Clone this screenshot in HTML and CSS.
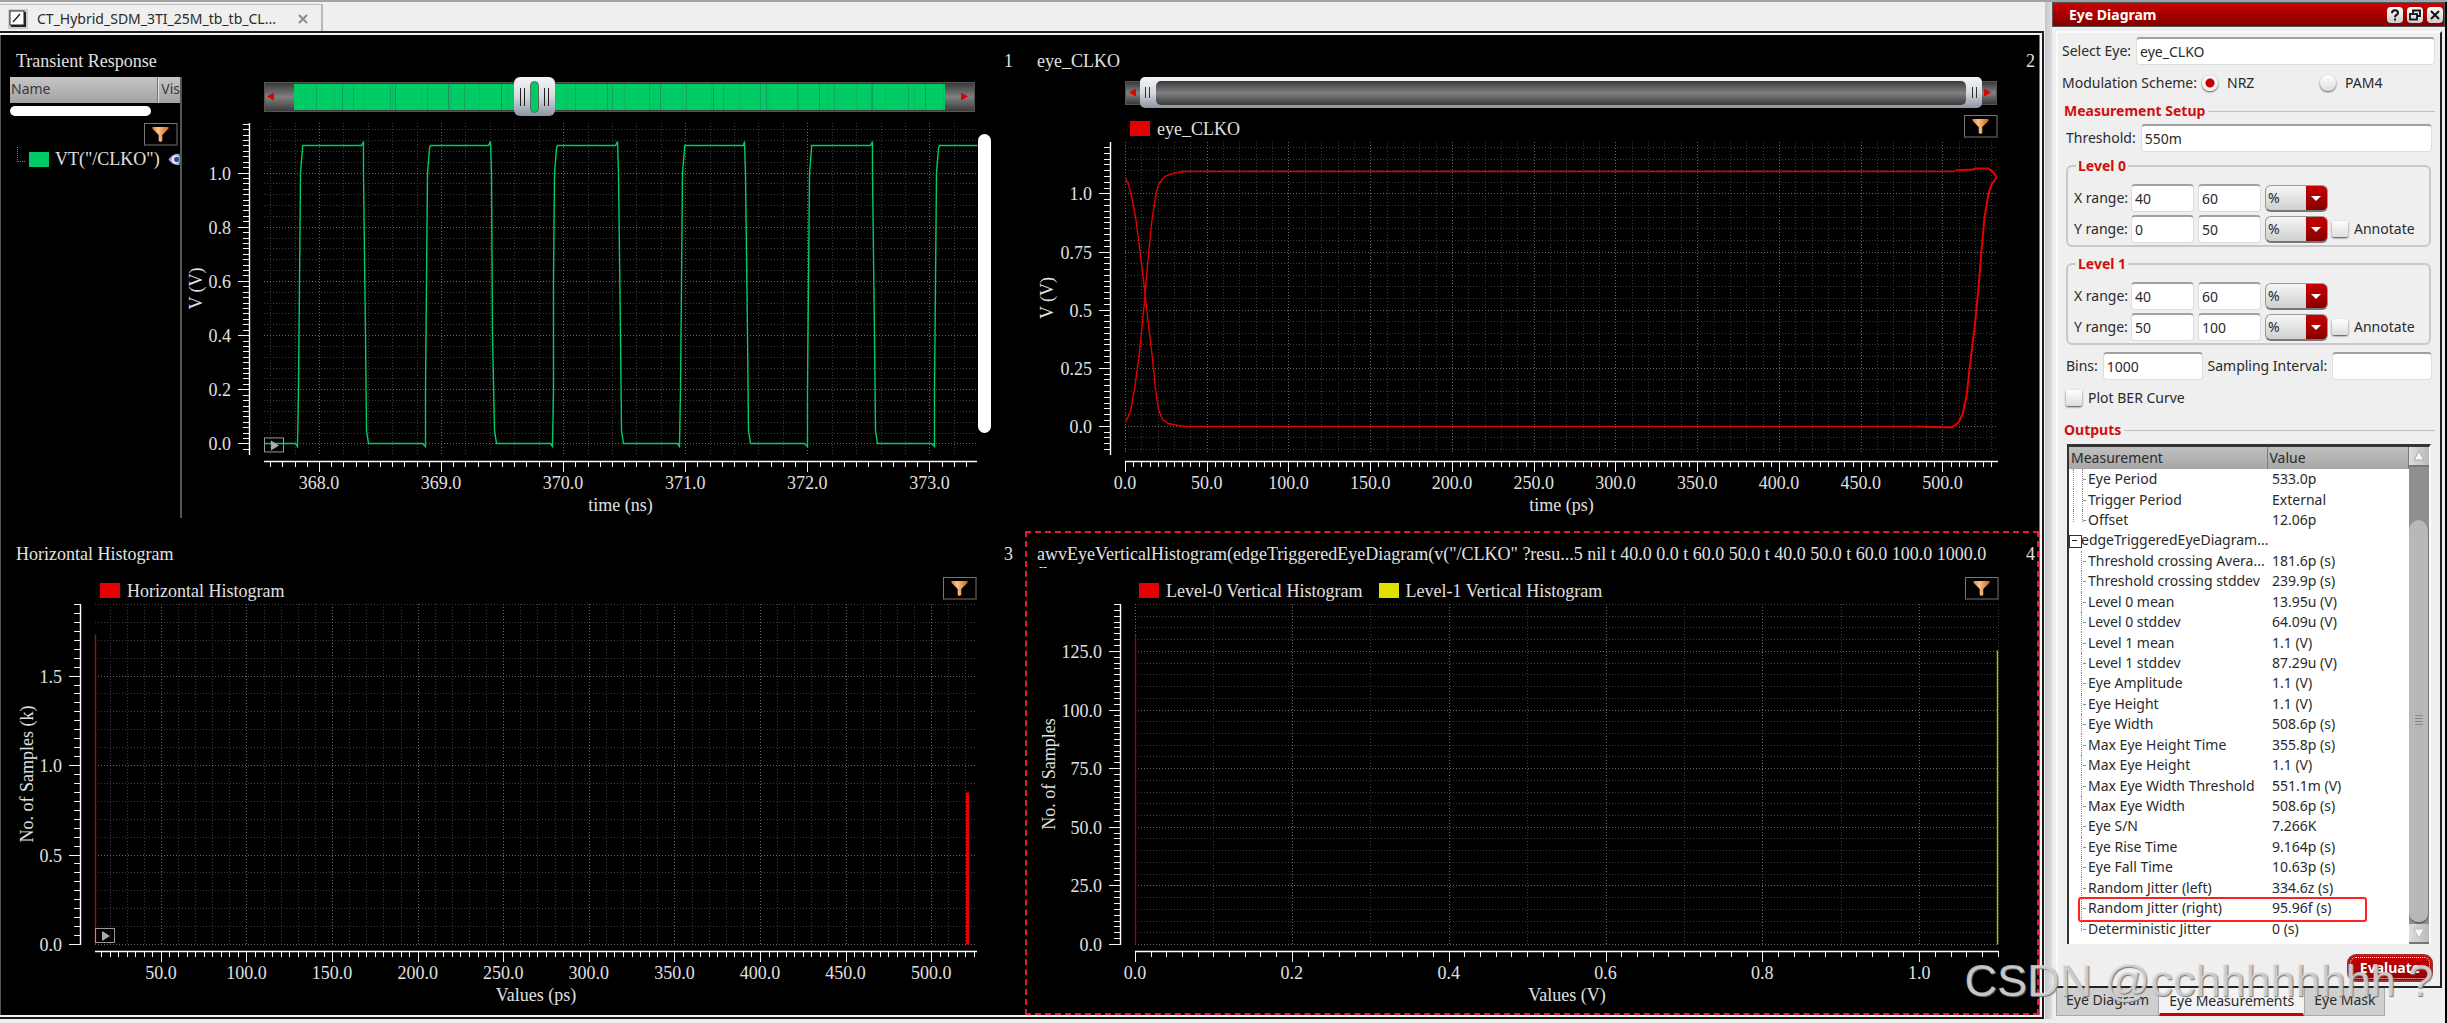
FILE: index.html
```html
<!DOCTYPE html>
<html lang="en">
<head>
<meta charset="utf-8">
<title>Eye Diagram</title>
<link rel="stylesheet" href="styles.css">
</head>
<body>
<svg class="defs" width="0" height="0" aria-hidden="true">
  <defs>
    <linearGradient id="copper" x1="0" x2="1" y1="0" y2="0">
      <stop offset="0" stop-color="#d97f2c"/><stop offset=".35" stop-color="#ffc48c"/><stop offset="1" stop-color="#c4691a"/>
    </linearGradient>
    <symbol id="funnel" viewBox="0 0 18 18">
      <path d="M0 1h18v2L11 10v7l-2 1-2-1v-7L0 3z" fill="url(#copper)"/>
    </symbol>
  </defs>
</svg>
<div class="app">
  <main class="workspace">
    <div class="tabbar">
      <div class="doc-tab">
        <svg class="doc-icon" viewBox="0 0 18 18" aria-hidden="true"><rect x="1" y="1" width="14" height="14" fill="#fff" stroke="#222"/><path d="M2 16h14V2" fill="none" stroke="#222" stroke-width="2"/><path d="M4 12L11 4" stroke="#222" stroke-width="1.3"/></svg>
        <span class="doc-name">CT_Hybrid_SDM_3TI_25M_tb_tb_CL...</span>
        <button class="doc-close" type="button" aria-label="Close tab"><svg viewBox="0 0 10 10"><path d="M1 1l8 8M9 1l-8 8" stroke="#8a8a8a" stroke-width="2"/></svg></button>
      </div>
    </div>
    <div class="plots">
      <section class="pane">
        <header class="pane-head"><h2>Transient Response</h2><span>1</span></header>
        <div class="pane-body">
          <aside class="traces">
            <div class="traces-head"><span class="col-name">Name</span><span class="col-vis">Vis</span></div>
            <div class="traces-scroll"></div>
            <button class="filter filter-trace" type="button" aria-label="Filter"><svg><use href="#funnel"/></svg></button>
            <div class="trace"><i class="swatch green"></i><span>VT("/CLKO")</span>
              <svg class="eye" viewBox="0 0 12 14" aria-hidden="true"><path d="M0 7Q5 0 12 1v12Q5 14 0 7z" fill="#93a5cf"/><circle cx="8" cy="7" r="4.5" fill="#e8eefb"/><circle cx="9" cy="7" r="3" fill="#2f4f96"/></svg>
            </div>
          </aside>
          <div class="chart-col">
            <div class="range range-wave">
              <div class="track"><i class="arrow left"></i><i class="wave"></i><i class="arrow right"></i></div>
              <div class="thumb"><i class="grip"></i><i class="pill"></i><i class="grip"></i></div>
            </div>
            <div class="chart-box"><svg class="chart" data-chart="transient"></svg><i class="vscroll"></i></div>
          </div>
        </div>
      </section>

      <section class="pane">
        <header class="pane-head"><h2>eye_CLKO</h2><span>2</span></header>
        <div class="range range-eye">
          <div class="track"><i class="arrow left"></i><i class="arrow right"></i></div>
          <div class="frame"><i class="grip"></i><i class="window"></i><i class="grip"></i></div>
        </div>
        <div class="legend legend-eye"><i class="swatch red"></i><span>eye_CLKO</span>
          <button class="filter" type="button" aria-label="Filter"><svg><use href="#funnel"/></svg></button></div>
        <div class="chart-box"><svg class="chart" data-chart="eye"></svg></div>
      </section>

      <section class="pane lower">
        <header class="pane-head"><h2>Horizontal Histogram</h2><span>3</span></header>
        <div class="legend legend-h"><i class="swatch red"></i><span>Horizontal Histogram</span>
          <button class="filter" type="button" aria-label="Filter"><svg><use href="#funnel"/></svg></button></div>
        <div class="chart-box"><svg class="chart" data-chart="horizontal"></svg></div>
      </section>

      <section class="pane lower selected">
        <header class="pane-head"><h2>awvEyeVerticalHistogram(edgeTriggeredEyeDiagram(v("/CLKO" ?resu...5 nil t 40.0 0.0 t 60.0 50.0 t 40.0 50.0 t 60.0 100.0 1000.0<small>--</small></h2><span>4</span></header>
        <div class="legend legend-v"><i class="swatch red"></i><span>Level-0 Vertical Histogram</span><i class="swatch yellow"></i><span>Level-1 Vertical Histogram</span>
          <button class="filter" type="button" aria-label="Filter"><svg><use href="#funnel"/></svg></button></div>
        <div class="chart-box"><svg class="chart" data-chart="vertical"></svg></div>
      </section>
    </div>
  </main>
  <div class="splitter"></div>

  <aside class="dock">
    <header class="dock-title"><h1>Eye Diagram</h1>
      <button type="button" aria-label="Help"><svg viewBox="0 0 16 16"><path d="M5 6.2Q5 3.2 8 3.2t3 2.6Q11 7.200 9.500 8T8 10.200" fill="none" stroke="#111" stroke-width="2"/><rect x="7" y="11.500" width="2" height="2" fill="#111"/></svg></button>
      <button type="button" aria-label="Float"><svg viewBox="0 0 16 16"><path d="M6 6V3.500h7V9h-3M6 3.500h7" fill="none" stroke="#111" stroke-width="1.800"/><rect x="3" y="7" width="7" height="5.500" fill="none" stroke="#111" stroke-width="1.800"/></svg></button>
      <button type="button" aria-label="Close"><svg viewBox="0 0 16 16"><path d="M4 4l8 8M12 4l-8 8" stroke="#111" stroke-width="2"/></svg></button>
    </header>
    <form class="dock-frame">
      <div class="row"><label for="eye">Select Eye:</label><input class="text grow" id="eye" type="text" value="eye_CLKO"></div>
      <div class="row scheme"><span>Modulation Scheme:</span>
        <label class="nrz"><input type="radio" name="scheme" checked>NRZ</label>
        <label><input type="radio" name="scheme">PAM4</label></div>
      <h3>Measurement Setup</h3>
      <div class="row inset"><label for="thr">Threshold:</label><input class="text grow" id="thr" type="text" value="550m"></div>
      <fieldset>
        <legend>Level 0</legend>
        <div class="pair"><label for="x0">X range:</label><input class="text" id="x0" type="text" value="40"><input class="text" type="text" aria-label="X range end" value="60"><span class="combo"><select aria-label="X unit"><option>%</option></select></span></div>
        <div class="pair"><label for="y0">Y range:</label><input class="text" id="y0" type="text" value="0"><input class="text" type="text" aria-label="Y range end" value="50"><span class="combo"><select aria-label="Y unit"><option>%</option></select></span><label class="check"><input type="checkbox">Annotate</label></div>
      </fieldset>
      <fieldset class="second">
        <legend>Level 1</legend>
        <div class="pair"><label for="x1">X range:</label><input class="text" id="x1" type="text" value="40"><input class="text" type="text" aria-label="X range end" value="60"><span class="combo"><select aria-label="X unit"><option>%</option></select></span></div>
        <div class="pair"><label for="y1">Y range:</label><input class="text" id="y1" type="text" value="50"><input class="text" type="text" aria-label="Y range end" value="100"><span class="combo"><select aria-label="Y unit"><option>%</option></select></span><label class="check"><input type="checkbox">Annotate</label></div>
      </fieldset>
      <div class="row inset bins"><label for="bins">Bins:</label><input class="text grow" id="bins" type="text" value="1000"><label for="samp">Sampling Interval:</label><input class="text grow" id="samp" type="text"></div>
      <div class="row inset"><label class="check"><input type="checkbox">Plot BER Curve</label></div>
      <h3 class="outputs">Outputs</h3>
      <div class="results">
        <table>
          <thead><tr><th>Measurement</th><th>Value</th></tr></thead>
          <tbody>
            <tr class="deep"><td>Eye Period</td><td>533.0p</td></tr>
            <tr class="deep"><td>Trigger Period</td><td>External</td></tr>
            <tr class="deep end"><td>Offset</td><td>12.06p</td></tr>
            <tr class="parent"><td>edgeTriggeredEyeDiagram...</td><td></td></tr>
            <tr><td>Threshold crossing Avera...</td><td>181.6p (s)</td></tr>
            <tr><td>Threshold crossing stddev</td><td>239.9p (s)</td></tr>
            <tr><td>Level 0 mean</td><td>13.95u (V)</td></tr>
            <tr><td>Level 0 stddev</td><td>64.09u (V)</td></tr>
            <tr><td>Level 1 mean</td><td>1.1 (V)</td></tr>
            <tr><td>Level 1 stddev</td><td>87.29u (V)</td></tr>
            <tr><td>Eye Amplitude</td><td>1.1 (V)</td></tr>
            <tr><td>Eye Height</td><td>1.1 (V)</td></tr>
            <tr><td>Eye Width</td><td>508.6p (s)</td></tr>
            <tr><td>Max Eye Height Time</td><td>355.8p (s)</td></tr>
            <tr><td>Max Eye Height</td><td>1.1 (V)</td></tr>
            <tr><td>Max Eye Width Threshold</td><td>551.1m (V)</td></tr>
            <tr><td>Max Eye Width</td><td>508.6p (s)</td></tr>
            <tr><td>Eye S/N</td><td>7.266K</td></tr>
            <tr><td>Eye Rise Time</td><td>9.164p (s)</td></tr>
            <tr><td>Eye Fall Time</td><td>10.63p (s)</td></tr>
            <tr><td>Random Jitter (left)</td><td>334.6z (s)</td></tr>
            <tr class="marked"><td>Random Jitter (right)</td><td>95.96f (s)</td></tr>
            <tr class="end"><td>Deterministic Jitter</td><td>0 (s)</td></tr>
          </tbody>
        </table>
        <div class="scroll">
          <button type="button" aria-label="Scroll up"><svg viewBox="0 0 12 12"><path d="M6 1l5 9H1z" fill="#f4f4f4" stroke="#aaa"/></svg></button>
          <div class="scroll-track"><i></i></div>
          <button type="button" aria-label="Scroll down"><svg viewBox="0 0 12 12"><path d="M6 11L1 2h10z" fill="#f8f8f8" stroke="#bbb"/></svg></button>
        </div>
      </div>
      <div class="actions"><button class="evaluate" type="button">Evaluate</button></div>
    </form>
    <nav class="dock-tabs">
      <button type="button">Eye Diagram</button><button class="active" type="button">Eye Measurements</button><button type="button">Eye Mask</button>
    </nav>
  </aside>
</div>
<div class="watermark">CSDN @cchhhhhhhh ?</div>
<script src="charts.js"></script>
</body>
</html>
```
FILE: styles.css
```css
* { box-sizing: border-box; }
html, body { margin: 0; height: 100%; }
body {
  font: 14px/20px "Noto Sans", "Open Sans", sans-serif;
  color: #2a2a2a;
  background: #efefef;
  overflow: hidden;
}
button, input, select { font: inherit; color: inherit; margin: 0; }
button { padding: 0; border: 0; background: none; }
h1, h2, h3 { margin: 0; font-size: inherit; font-weight: inherit; }
i { display: block; }
.defs { position: absolute; }

.app {
  display: flex;
  height: 100vh;
  min-height: 1000px;
  border-top: 2px solid #a3a3a3;
}
.workspace {
  flex: 1;
  min-width: 0;
  display: flex;
  flex-direction: column;
  padding-bottom: 6px;
}

/* document tabs */
.tabbar { height: 33px; border-bottom: 3px solid #fafafa; display: flex; padding-top: 2px; }
.doc-tab {
  width: 323px;
  height: 28px;
  display: flex;
  align-items: center;
  padding: 0 13px 0 8px;
  border-top: 1px solid #bbb;
  border-right: 2px solid #b8b8b8;
}
.doc-icon { width: 20px; height: 20px; background: #ccc; padding: 1px; }
.doc-name { flex: 1; padding-left: 9px; white-space: nowrap; }
.doc-close { width: 10px; height: 10px; display: flex; }

/* plot canvas */
.plots {
  flex: 1;
  min-height: 0;
  display: grid;
  grid-template-columns: minmax(0, 1024fr) minmax(0, 1014fr);
  grid-template-rows: minmax(0, 496fr) minmax(0, 484fr);
  background: #000;
  border-left: 1px solid #555;
  border-right: 1px solid #777;
  box-shadow: 0 0 0 2px #f6f3f5, 0 0 0 4px #1c1c1c;
  margin-right: 5px;
  margin-bottom: 2px;
  color: #e0e0e0;
  font: 18px/22px "Liberation Serif", serif;
}
.pane { display: flex; flex-direction: column; min-width: 0; }
.pane-head { height: 42px; flex: none; display: flex; justify-content: space-between; padding: 15px 4px 0 12px; white-space: nowrap; }
.pane:nth-child(odd) .pane-head { padding-left: 15px; padding-right: 12px; }
.lower .pane-head { padding-top: 12px; }
.pane-head small { display: block; font-size: 12px; line-height: 4px; padding-left: 2px; }
.selected { border: 2px dashed #e8173a; }
.selected .pane-head { padding: 10px 2px 0 10px; height: 40px; }
.pane-body { flex: 1; display: flex; min-height: 0; }

.traces { width: 181px; padding-left: 9px; border-right: 2px solid #555; margin-bottom: 13px; flex: none; }
.traces-head {
  height: 26px;
  display: flex;
  background: linear-gradient(#c6c6c6, #a2a2a2);
  color: #3a3a3a;
  font: 14px/23px "Noto Sans", "Open Sans", sans-serif;
  overflow: hidden;
}
.col-name { width: 153px; padding-left: 1px; border-right: 1px solid #777; }
.col-vis { padding-left: 2px; border-left: 1px solid #ddd; }
.traces-scroll { width: 141px; height: 10px; margin-top: 3px; border-radius: 5px; background: #fff; }
.filter {
  width: 34px;
  height: 23px;
  border: 1px solid #777;
  border-right: 2px solid #3a3a3a;
  border-bottom: 2px solid #3a3a3a;
  background: #000;
  display: flex;
  align-items: center;
  justify-content: center;
  margin-left: auto;
  flex: none;
}
.filter svg { width: 17px; height: 16px; }
.filter-trace { margin: 7px 2px 0 auto; }
.trace { display: flex; align-items: center; padding-left: 19px; height: 26px; position: relative; }
.trace::before { content: ""; width: 7px; height: 14px; border-left: 1px dotted #777; border-bottom: 1px dotted #777; position: absolute; left: 7px; top: 1px; }
.trace span { padding-left: 6px; }
.eye { width: 12px; height: 13px; margin-left: auto; }
.swatch { width: 20px; height: 15px; flex: none; }
.green { background: #00cc66; }
.red { background: #e40000; }
.yellow { background: #e0e000; }

.chart-col { flex: 1; min-width: 0; display: flex; flex-direction: column; }
.chart-box { flex: 1; min-height: 0; position: relative; }
.chart { position: absolute; inset: 0; width: 100%; height: 100%; }
.chart text { fill: #e0e0e0; }
.vscroll { position: absolute; right: 34px; top: 18px; bottom: 98px; width: 13px; border-radius: 7px; background: #fff; }

/* range sliders */
.range { position: relative; display: flex; align-items: center; flex: none; }
.track {
  flex: 1;
  display: flex;
  align-items: center;
  justify-content: space-between;
  border: 1px solid #555;
  background: linear-gradient(#3a3a3a, #808080 50%, #3a3a3a);
}
.range-wave { height: 39px; margin: 0 50px 0 82px; }
.range-wave .track { height: 30px; padding: 1px 6px 1px 2px; }
.range-eye { height: 31px; margin: 0 42px 0 100px; }
.range-eye .track { height: 24px; padding: 0 5px 0 3px; }
.arrow { width: 7px; height: 8px; background: #e00000; }
.arrow.left { clip-path: polygon(100% 0, 0 50%, 100% 100%); }
.arrow.right { clip-path: polygon(0 0, 100% 50%, 0 100%); }
.wave {
  flex: 1;
  height: 26px;
  margin: 0 16px 0 20px;
  background:
    repeating-linear-gradient(90deg, transparent 0 22px, #2a704a66 22px 23px, transparent 23px 37px),
    repeating-linear-gradient(90deg, transparent 0 11px, #30805044 11px 12px, transparent 12px 29px),
    repeating-linear-gradient(90deg, transparent 0 48px, #2a604a77 48px 49px, transparent 49px 53px),
    #00cc66;
}
.thumb {
  position: absolute;
  left: 35.2%;
  width: 41px;
  height: 39px;
  border-radius: 6px;
  background: linear-gradient(#f4f5fa, #d6d9e0 50%, #8c96a0);
  display: flex;
  align-items: center;
  justify-content: space-between;
  padding: 0 6px;
}
.grip { width: 5px; height: 18px; border: solid #222; border-width: 0 1px; }
.pill { width: 9px; height: 32px; border-radius: 5px; background: #0c6; border: 1px solid #5a6a62; }
.frame {
  position: absolute;
  inset: 0 15px;
  border-radius: 5px;
  background: linear-gradient(#f4f5fa, #d6d9e0 50%, #8c96a0);
  display: flex;
  align-items: center;
  justify-content: space-between;
  padding: 0 5px;
}
.frame .grip { height: 11px; width: 5px; border-color: #333; }
.window { flex: 1; height: 24px; margin: 0 6px; border-radius: 5px; background: linear-gradient(#3a3a3a, #808080 50%, #3a3a3a); }

.legend { display: flex; align-items: center; gap: 7px; flex: none; white-space: nowrap; }
.legend .filter { align-self: flex-start; }
.legend span + .swatch { margin-left: 9px; }
.legend-eye { height: 34px; padding: 7px 41px 0 105px; }
.legend-h { height: 31px; padding: 4px 48px 0 99px; }
.legend-v { height: 31px; padding: 4px 38px 0 112px; }

/* splitter and dock */
.splitter { flex: 0 0 7px; background: linear-gradient(90deg, #c4c5cc, #dcdce0); margin-bottom: 4px; }
.dock { flex: 0 0 395px; border-right: 2px solid #000; display: flex; flex-direction: column; padding-bottom: 7px; }
.dock-title {
  height: 25px;
  flex: none;
  display: flex;
  align-items: center;
  gap: 4px;
  padding: 0 1px 0 16px;
  background: linear-gradient(#cc0000, #820000);
  border: 1px solid #555;
  color: #fff;
  font-weight: bold;
}
.dock-title h1 { flex: 1; }
.dock-title button { width: 16px; height: 16px; border-radius: 4px; background: linear-gradient(#fff, #ccc); display: flex; }
.dock-frame {
  flex: 1;
  min-height: 0;
  margin: 4px 3px 0 4px;
  padding: 4px 5px 4px 4px;
  border: 2px solid #fafafa;
  border-right-color: #222;
  border-bottom-color: #222;
  display: flex;
  flex-direction: column;
}
.row { display: flex; align-items: center; gap: 5px; height: 28px; flex: none; margin-bottom: 4px; white-space: nowrap; }
.inset { padding: 0 3px 0 4px; }
.grow { flex: 1; min-width: 0; }
.text {
  height: 28px;
  width: 63px;
  padding: 0 3px;
  border: 1px solid #ddd;
  border-top: 2px solid #a0a0a0;
  border-radius: 4px;
  background: #fff;
}
.scheme label { display: flex; align-items: center; gap: 9px; }
.scheme .nrz { width: 113px; }
input[type=radio], input[type=checkbox] { appearance: none; width: 16px; height: 16px; flex: none; background: linear-gradient(#fff, #ddd); box-shadow: 0 1px 2px #444; }
input[type=radio] { border-radius: 50%; }
input[type=radio]:checked { background: radial-gradient(circle, #c40000 4px, #f4f4f4 5px); }
input[type=checkbox] { border-radius: 2px; }
.check { display: flex; align-items: center; gap: 6px; }
h3 { display: flex; align-items: center; gap: 3px; height: 20px; flex: none; padding-left: 2px; margin-bottom: 3px; color: #d01010; font-weight: bold; }
h3::after { content: ""; flex: 1; height: 1px; background: #c0c0c0; }
.outputs { margin-top: 4px; }
fieldset { margin: 0 4px 7px 4px; padding: 8px 0 2px 6px; border: 2px solid #c8c8c8; border-radius: 6px; min-width: 0; flex: none; }
legend { margin-left: 2px; padding: 0 2px; height: 20px; color: #d01010; font-weight: bold; }
.pair { display: flex; align-items: center; gap: 4px; height: 28px; white-space: nowrap; }
.pair + .pair { margin-top: 3px; }
.pair > label:first-child { width: 53px; }
.combo { position: relative; display: flex; }
.combo select {
  appearance: none;
  width: 63px;
  height: 27px;
  padding: 0 2px;
  border: 1px solid #999;
  border-bottom: 2px solid #777;
  border-radius: 6px;
  background: linear-gradient(#c80000, #860000) right / 21px 100% no-repeat, linear-gradient(#f6f6f6, #cfcfcf);
}
.combo::after { content: ""; position: absolute; right: 7px; top: 11px; border: 5px solid transparent; border-top-color: #fff; border-bottom: 0; pointer-events: none; }

/* results table */
.results { flex: 1; min-height: 0; display: flex; margin: 1px 4px 0 5px; background: #fff; border: 2px solid #333; border-top-width: 3px; border-right-color: #fafafa; border-bottom: 0; overflow: hidden; }
table { flex: none; width: calc(100% - 20px); height: 492px; border-collapse: collapse; table-layout: fixed; }
th { height: 22px; padding: 0 2px; text-align: left; font-weight: normal; background: linear-gradient(#c0c0c0, #a6a6a6); border-right: 1px solid #7a7a7a; }
th:first-child { width: 198px; }
td { position: relative; padding: 0 5px; line-height: 20px; white-space: nowrap; }
td:first-child { padding-left: 19px; }
td:first-child::before { content: ""; position: absolute; left: 12px; top: 0; bottom: 0; border-left: 1px dotted #888; }
td:first-child::after { content: ""; position: absolute; left: 14px; width: 2px; top: 50%; border-top: 1px dotted #888; }
.deep td:first-child::before { left: 4px; width: 8px; border-right: 1px dotted #888; }
.parent td:first-child { padding-left: 12px; }
.parent td:first-child::before { left: 0; top: 5px; bottom: auto; width: 11px; height: 11px; border: 1px solid #333; background: #fff; }
.parent td:first-child::after { left: 3px; width: 5px; border-top: 1px solid #222; }
.end td:first-child::before { bottom: 8px; }
.marked td:last-child::after { content: ""; position: absolute; left: -189px; width: 285px; top: -1px; bottom: -4px; border: 2px solid #ff2020; border-radius: 3px; }
.scroll { flex: 0 0 20px; display: flex; flex-direction: column; background: #8f8f8f; }
.scroll button { height: 20px; background: linear-gradient(90deg, #ddd, #bbb); border-bottom: 2px solid #777; display: flex; align-items: center; justify-content: center; }
.scroll button svg { width: 12px; }
.scroll-track { flex: 1; padding-top: 53px; display: flex; }
.scroll-track i {
  flex: 1;
  border-radius: 10px;
  border-bottom: 2px solid #666;
  border-right: 1px solid #777;
  background: repeating-linear-gradient(#888 0 1px, transparent 1px 3px) center / 8px 12px no-repeat, #b8b8b8;
}
.actions { flex: none; display: flex; justify-content: flex-end; padding: 10px 2px 0; }
.evaluate { width: 86px; height: 28px; border-radius: 9px; background: linear-gradient(#cc0000, #900000); color: #fff; font-weight: bold; border: 2px solid #a03030; outline: 1px dotted #fff; outline-offset: -4px; }
.dock-tabs { display: flex; padding-left: 4px; flex: none; }
.dock-tabs button { height: 28px; padding: 0 9px 4px; background: #cfcfcf; border: 1px solid #aaa; border-top: 0; }
.dock-tabs .active { background: #f2f2f2; border-color: #f2f2f2; border-bottom: 3px solid #c80000; padding-bottom: 0; }

.watermark {
  position: absolute;
  right: 14px;
  bottom: 16px;
  font: 45px/52px "Liberation Sans", sans-serif;
  color: rgba(225, 225, 225, 0.8);
  text-shadow: 1px 1px 1px #777;
  pointer-events: none;
}
```
FILE: charts.js
```js
const NS = "http://www.w3.org/2000/svg";

// Clock waveform: repeated edges with a small overshoot before each fall.
function clockWave() {
  const pts = [[367.55, 0]];
  for (let k = 0; k < 6; k++) {
    const t = 367.824 + k * 1.0424;
    pts.push([t - 0.02, 0], [t, -0.008], [t + 0.005, 0.2], [t + 0.012, 0.6], [t + 0.02, 1.0], [t + 0.035, 1.09], [t + 0.04, 1.1]);
    if (k < 5) pts.push([t + 0.52, 1.1], [t + 0.533, 1.118], [t + 0.54, 1.0], [t + 0.555, 0.4], [t + 0.565, 0.05], [t + 0.58, 0]);
  }
  pts.push([373.39, 1.1]);
  return pts;
}

const charts = {
  transient: {
    left: 82, right: 48, top: 7, bottom: 70, x: [367.55, 373.39], y: [-0.039, 1.183],
    xt: { major: 1, tick: 0.1, grid: 0.2, fmt: v => v.toFixed(1) },
    yt: { major: 0.2, tick: 0.02, grid: 0.04, fmt: v => v.toFixed(1) },
    xTitle: "time (ns)", yTitle: "V (V)", yTitleX: 53, play: true,
    lines: [{ color: "#00cc66", pts: clockWave() }]
  },
  eye: {
    left: 100, right: 41, top: 0, bottom: 70, x: [0, 534], y: [-0.121, 1.221],
    xt: { major: 50, tick: 5, grid: 10, fmt: v => v.toFixed(1) },
    yt: { major: 0.25, tick: 0.025, grid: 0.05, fmt: v => (Math.round(v * 100) % 50 ? v.toFixed(2) : v.toFixed(1)) },
    xTitle: "time (ps)", yTitle: "V (V)", yTitleX: 63,
    lines: [
      { color: "#e00000", pts: [[0, 1.071], [1.9, 1.039], [3.9, 0.988], [6.3, 0.901], [8.7, 0.77], [11.6, 0.595], [14, 0.435], [16.4, 0.29], [18.4, 0.159], [20.3, 0.071], [22.5, 0.031], [26.1, 0.013], [35.3, 0.001], [484, 0]] },
      { color: "#e00000", pts: [[0, 0.016], [3.1, 0.064], [5.8, 0.159], [8.7, 0.319], [11.6, 0.537], [13.5, 0.697], [16.1, 0.872], [18.4, 0.988], [20.3, 1.039], [23.7, 1.076], [28.5, 1.087], [35.3, 1.098], [508, 1.098]] },
      { color: "#e80000", w: 2, pts: [[508, 1.1], [518, 1.104], [520, 1.109], [527.7, 1.109], [530.8, 1.093], [532.8, 1.071], [529.8, 1.039], [527.7, 1.003], [525.7, 0.9], [523.6, 0.755], [521.6, 0.595], [519.6, 0.421], [516.5, 0.246], [514.5, 0.13], [512, 0.049], [509.4, 0.016], [505.3, -0.003], [484, -0.002]] }
    ]
  },
  horizontal: {
    left: 94, right: 48, top: 0, bottom: 64, x: [11.5, 526.8], y: [0, 1.9],
    xt: { major: 50, tick: 5, grid: 10, fmt: v => v.toFixed(1) },
    yt: { major: 0.5, tick: 0.05, grid: 0.1, fmt: v => v.toFixed(1) },
    xTitle: "Values (ps)", yTitle: "No. of Samples (k)", yTitleX: 53, play: true,
    lines: [
      { color: "#c00000", pts: [[11.6, 0], [11.6, 1.73]] },
      { color: "#e80000", w: 3, pts: [[521.2, 0], [521.2, 0.85]] }
    ]
  },
  vertical: {
    left: 108, right: 38, top: 0, bottom: 62, x: [0, 1.1018], y: [0, 145],
    xt: { major: 0.2, tick: 0.02, grid: 0.1, fmt: v => v.toFixed(1) },
    yt: { major: 25, tick: 2.5, grid: 5, fmt: v => v.toFixed(1) },
    xTitle: "Values (V)", yTitle: "No. of Samples", yTitleX: 71,
    lines: [
      { color: "#a00000", pts: [[0, 0], [0, 132.4]] },
      { color: "#b8b800", pts: [[1.0995, 0], [1.0995, 125.5]] }
    ]
  }
};

function add(svg, name, attrs, text) {
  const el = document.createElementNS(NS, name);
  for (const k in attrs) el.setAttribute(k, attrs[k]);
  if (text !== undefined) el.textContent = text;
  svg.appendChild(el);
}

function steps(range, step) {
  const out = [];
  for (let i = Math.ceil(range[0] / step - 1e-6); i * step <= range[1] + 1e-6; i++) out.push(i * step);
  return out;
}

const isMajor = (v, m) => Math.abs(v / m - Math.round(v / m)) < 1e-6;

function draw(svg) {
  const c = charts[svg.dataset.chart];
  const W = svg.clientWidth, H = svg.clientHeight;
  svg.replaceChildren();
  const x0 = c.left, x1 = W - c.right, axisY = H - c.bottom, y0 = axisY - 7, y1 = c.top, axisX = x0 - 15;
  const sx = v => x0 + (v - c.x[0]) / (c.x[1] - c.x[0]) * (x1 - x0);
  const sy = v => y0 - (v - c.y[0]) / (c.y[1] - c.y[0]) * (y0 - y1);
  const px = v => Math.round(v) + 0.5;
  const paths = { minor: "", major: "", tick: "" };

  for (const v of steps(c.x, c.xt.grid)) paths[isMajor(v, c.xt.major) ? "major" : "minor"] += `M${px(sx(v))} ${y1}V${y0}`;
  for (const v of steps(c.y, c.yt.grid)) paths[isMajor(v, c.yt.major) ? "major" : "minor"] += `M${x0} ${px(sy(v))}H${x1}`;
  for (const v of steps(c.x, c.xt.tick)) {
    const big = isMajor(v, c.xt.major);
    paths.tick += `M${px(sx(v))} ${axisY}v${big ? 11 : 6}`;
    if (big) add(svg, "text", { x: sx(v), y: axisY + 28, "text-anchor": "middle" }, c.xt.fmt(v));
  }
  for (const v of steps(c.y, c.yt.tick)) {
    const big = isMajor(v, c.yt.major);
    paths.tick += `M${axisX} ${px(sy(v))}h${big ? -11 : -6}`;
    if (big) add(svg, "text", { x: axisX - 18, y: sy(v) + 7, "text-anchor": "end" }, c.yt.fmt(v));
  }
  add(svg, "path", { d: paths.minor, stroke: "#3a3a3a", "stroke-dasharray": "1 2", fill: "none" });
  add(svg, "path", { d: paths.major, stroke: "#666", "stroke-dasharray": "1 2", fill: "none" });
  add(svg, "path", { d: paths.tick, stroke: "#f4f4f4", fill: "none" });
  add(svg, "path", { d: `M${axisX + 0.5} ${y1}V${y0 + 1}M${x0} ${axisY + 0.5}H${x1}`, stroke: "#fff", "stroke-width": 1.4, fill: "none" });
  for (const l of c.lines) {
    add(svg, "polyline", { points: l.pts.map(p => `${px(sx(p[0]))},${px(sy(p[1]))}`).join(" "), stroke: l.color, "stroke-width": l.w || 1.4, fill: "none" });
  }
  if (c.play) {
    const by = sy(0) - (c.top ? 6 : 16);
    add(svg, "rect", { x: x0 + 0.5, y: by + 0.5, width: 19, height: 14, fill: "none", stroke: "#999" });
    add(svg, "path", { d: `M${x0 + 7} ${by + 3}l8 5l-8 5z`, fill: "#aaa" });
  }
  add(svg, "text", { x: (x0 + x1) / 2, y: axisY + 50, "text-anchor": "middle" }, c.xTitle);
  const ty = (y0 + y1) / 2, tx = axisX - c.yTitleX + 6;
  add(svg, "text", { x: tx, y: ty, "text-anchor": "middle", transform: `rotate(-90 ${tx} ${ty})` }, c.yTitle);
}

const drawAll = () => document.querySelectorAll(".chart").forEach(draw);
drawAll();
window.addEventListener("resize", drawAll);
```
